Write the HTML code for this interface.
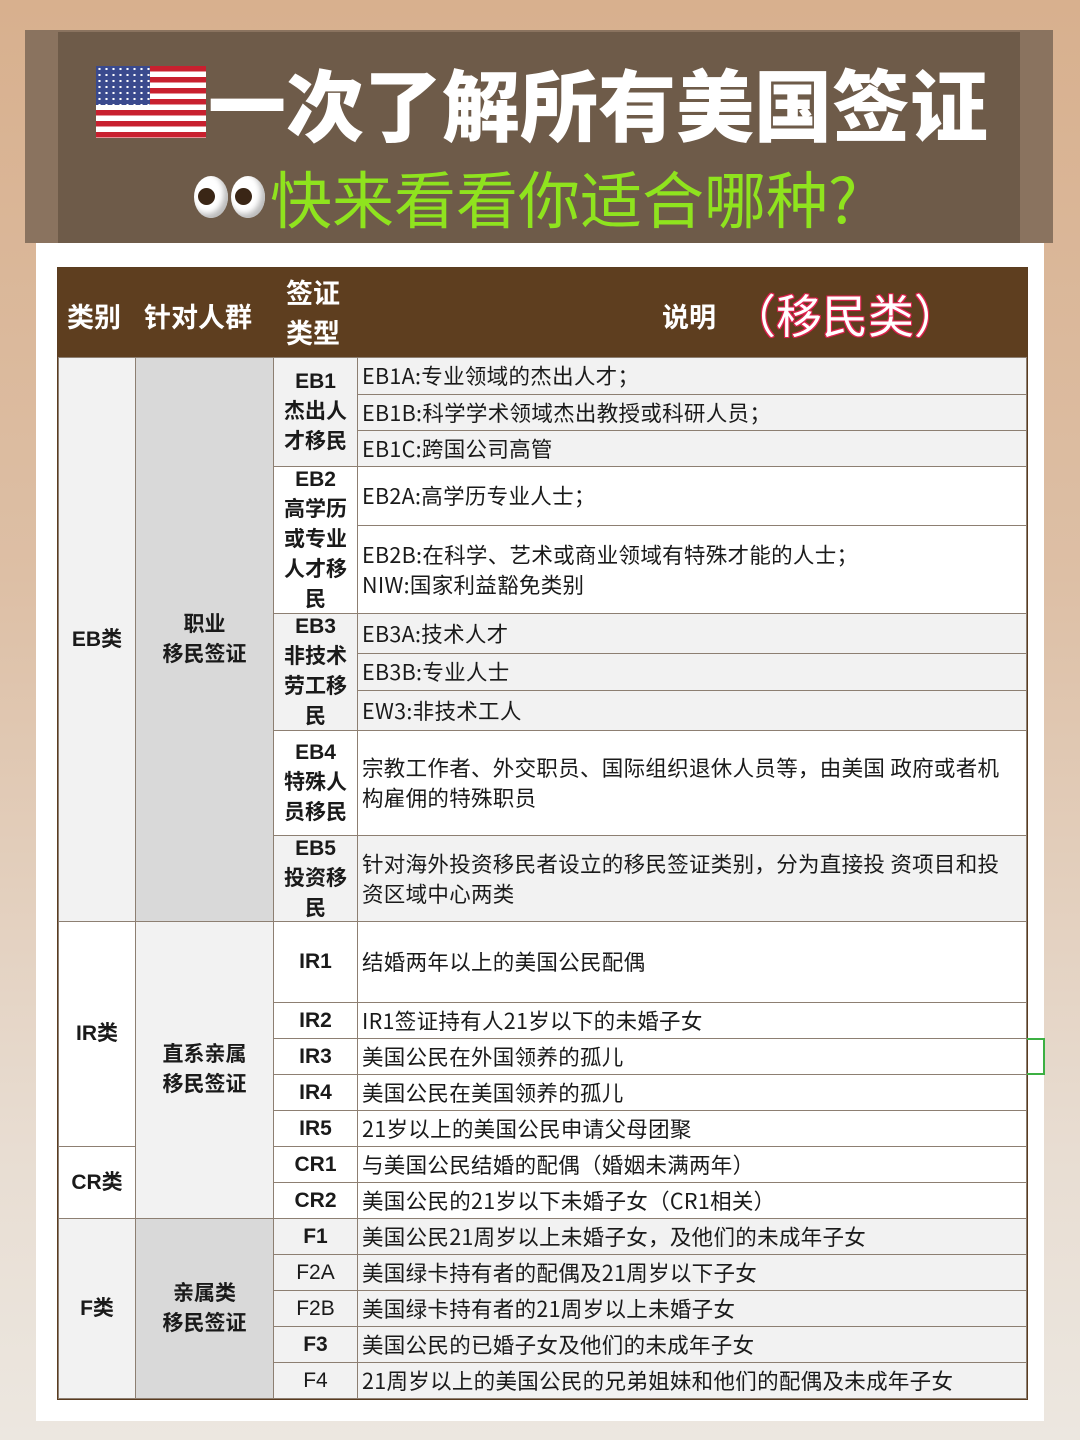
<!DOCTYPE html>
<html><head><meta charset="utf-8"><style>
*{margin:0;padding:0;box-sizing:border-box}
body{width:1080px;height:1440px;position:relative;overflow:hidden;font-family:"Liberation Sans","Noto Sans CJK SC",sans-serif;background:linear-gradient(180deg,#d8b08e 0%,#ddbfa5 40%,#e8ddd2 80%,#ece7e0 100%)}
.c{position:absolute;border:1px solid #8d7f72;display:flex;align-items:center;color:#1a1a1a}
.d{padding-left:4px;font-size:21.5px;line-height:30px;background:#fff;font-family:"Noto Sans CJK SC",sans-serif;letter-spacing:0.3px}
.g{background:#f2f2f2}
.k{justify-content:center;text-align:center;font-weight:bold;font-size:21px;line-height:30px}
.n{font-weight:normal}
.h{position:absolute;color:#fff;font-weight:bold;font-size:27px}
</style></head><body>
<div style="position:absolute;left:25px;top:30px;width:1028px;height:213px;background:#8a735f"></div>
<div style="position:absolute;left:58px;top:32px;width:962px;height:211px;background:#6e5b49"></div>
<div style="position:absolute;left:36px;top:243px;width:1008px;height:1178px;background:#fff"></div>
<!-- flag -->
<div style="position:absolute;left:96px;top:66px;width:110px;height:72px;background:repeating-linear-gradient(180deg,#c8202f 0 5.5px,#fff 5.5px 11px)"></div>
<div style="position:absolute;left:96px;top:66px;width:54px;height:39px;background:#3a4a8e;background-image:radial-gradient(#fff 1px,transparent 1.5px);background-size:7px 6px"></div>
<div style="position:absolute;left:208px;top:52px;font-size:78px;font-weight:900;color:#fff;font-family:'Noto Sans CJK SC',sans-serif;line-height:100px;white-space:nowrap">一次了解所有美国签证</div>
<div style="position:absolute;left:194px;top:176px;width:34px;height:42px;border-radius:50%;background:#fff;box-shadow:inset -4px -4px 6px #bbb"><div style="position:absolute;left:4px;top:12px;width:17px;height:17px;border-radius:50%;background:#3a2616"></div></div>
<div style="position:absolute;left:231px;top:176px;width:34px;height:42px;border-radius:50%;background:#fff;box-shadow:inset -4px -4px 6px #bbb"><div style="position:absolute;left:4px;top:12px;width:17px;height:17px;border-radius:50%;background:#3a2616"></div></div>
<div style="position:absolute;left:270px;top:158px;font-size:62px;color:#8fe31e;font-family:'Noto Sans CJK SC',sans-serif;line-height:76px;white-space:nowrap">快来看看你适合哪种?</div>

<div style="position:absolute;left:57px;top:267px;width:971px;height:1133px;border:2px solid #5a3c20"></div>
<div style="position:absolute;left:58px;top:268px;width:969px;height:89px;background:#5e3e1f"></div>
<div class="h" style="left:67px;top:296px">类别</div>
<div class="h" style="left:144px;top:296px">针对人群</div>
<div class="h" style="left:286px;top:274px;line-height:40px">签证<br>类型</div>
<div class="h" style="left:662px;top:296px">说明</div>
<div style="position:absolute;left:730px;top:284px;font-size:46px;color:#fff;text-shadow:0 0 2px #e0224f,1px 1px 0 #e0224f,-1px -1px 0 #e0224f,1px -1px 0 #e0224f,-1px 1px 0 #e0224f;line-height:60px;font-family:'Noto Sans CJK SC',sans-serif;white-space:nowrap">（移民类）</div>

<div class="c g k" style="left:58px;top:357px;width:78px;height:565px">EB类</div>
<div class="c g k" style="left:58px;top:921px;width:78px;height:226px;background:#fff">IR类</div>
<div class="c k" style="left:58px;top:1146px;width:78px;height:73px;background:#fff">CR类</div>
<div class="c g k" style="left:58px;top:1218px;width:78px;height:181px">F类</div>
<div class="c k" style="left:135px;top:357px;width:139px;height:565px;background:#d9d9d9">职业<br>移民签证</div>
<div class="c g k" style="left:135px;top:921px;width:139px;height:298px">直系亲属<br>移民签证</div>
<div class="c k" style="left:135px;top:1218px;width:139px;height:181px;background:#d9d9d9">亲属类<br>移民签证</div>

<div class="c g k" style="left:273px;top:357px;width:85px;height:110px">EB1<br>杰出人<br>才移民</div>
<div class="c k" style="left:273px;top:466px;width:85px;height:148px;background:#fff">EB2<br>高学历<br>或专业<br>人才移<br>民</div>
<div class="c g k" style="left:273px;top:613px;width:85px;height:118px">EB3<br>非技术<br>劳工移<br>民</div>
<div class="c k" style="left:273px;top:730px;width:85px;height:106px;background:#fff">EB4<br>特殊人<br>员移民</div>
<div class="c g k" style="left:273px;top:835px;width:85px;height:87px">EB5<br>投资移<br>民</div>
<div class="c k" style="left:273px;top:921px;width:85px;height:82px;background:#fff">IR1</div>
<div class="c k" style="left:273px;top:1002px;width:85px;height:37px;background:#fff">IR2</div>
<div class="c k" style="left:273px;top:1038px;width:85px;height:37px;background:#fff">IR3</div>
<div class="c k" style="left:273px;top:1074px;width:85px;height:37px;background:#fff">IR4</div>
<div class="c k" style="left:273px;top:1110px;width:85px;height:37px;background:#fff">IR5</div>
<div class="c k" style="left:273px;top:1146px;width:85px;height:37px;background:#fff">CR1</div>
<div class="c k" style="left:273px;top:1182px;width:85px;height:37px;background:#fff">CR2</div>
<div class="c g k" style="left:273px;top:1218px;width:85px;height:37px">F1</div>
<div class="c g k n" style="left:273px;top:1254px;width:85px;height:37px">F2A</div>
<div class="c g k n" style="left:273px;top:1290px;width:85px;height:37px">F2B</div>
<div class="c g k" style="left:273px;top:1326px;width:85px;height:37px">F3</div>
<div class="c g k n" style="left:273px;top:1362px;width:85px;height:37px">F4</div>

<div class="c d g" style="left:357px;top:357px;width:670px;height:38px">EB1A:专业领域的杰出人才；</div>
<div class="c d g" style="left:357px;top:394px;width:670px;height:37px">EB1B:科学学术领域杰出教授或科研人员；</div>
<div class="c d g" style="left:357px;top:430px;width:670px;height:37px">EB1C:跨国公司高管</div>
<div class="c d" style="left:357px;top:466px;width:670px;height:60px">EB2A:高学历专业人士；</div>
<div class="c d" style="left:357px;top:525px;width:670px;height:89px">EB2B:在科学、艺术或商业领域有特殊才能的人士；<br>NIW:国家利益豁免类别</div>
<div class="c d g" style="left:357px;top:613px;width:670px;height:41px">EB3A:技术人才</div>
<div class="c d g" style="left:357px;top:653px;width:670px;height:38px">EB3B:专业人士</div>
<div class="c d g" style="left:357px;top:690px;width:670px;height:41px">EW3:非技术工人</div>
<div class="c d" style="left:357px;top:730px;width:670px;height:106px">宗教工作者、外交职员、国际组织退休人员等，由美国 政府或者机<br>构雇佣的特殊职员</div>
<div class="c d g" style="left:357px;top:835px;width:670px;height:87px">针对海外投资移民者设立的移民签证类别，分为直接投 资项目和投<br>资区域中心两类</div>
<div class="c d" style="left:357px;top:921px;width:670px;height:82px">结婚两年以上的美国公民配偶</div>
<div class="c d" style="left:357px;top:1002px;width:670px;height:37px">IR1签证持有人21岁以下的未婚子女</div>
<div class="c d" style="left:357px;top:1038px;width:670px;height:37px">美国公民在外国领养的孤儿</div>
<div class="c d" style="left:357px;top:1074px;width:670px;height:37px">美国公民在美国领养的孤儿</div>
<div class="c d" style="left:357px;top:1110px;width:670px;height:37px">21岁以上的美国公民申请父母团聚</div>
<div class="c d" style="left:357px;top:1146px;width:670px;height:37px">与美国公民结婚的配偶（婚姻未满两年）</div>
<div class="c d" style="left:357px;top:1182px;width:670px;height:37px">美国公民的21岁以下未婚子女（CR1相关）</div>
<div class="c d g" style="left:357px;top:1218px;width:670px;height:37px">美国公民21周岁以上未婚子女，及他们的未成年子女</div>
<div class="c d g" style="left:357px;top:1254px;width:670px;height:37px">美国绿卡持有者的配偶及21周岁以下子女</div>
<div class="c d g" style="left:357px;top:1290px;width:670px;height:37px">美国绿卡持有者的21周岁以上未婚子女</div>
<div class="c d g" style="left:357px;top:1326px;width:670px;height:37px">美国公民的已婚子女及他们的未成年子女</div>
<div class="c d g" style="left:357px;top:1362px;width:670px;height:37px">21周岁以上的美国公民的兄弟姐妹和他们的配偶及未成年子女</div>
<div style="position:absolute;left:1027px;top:1038px;width:18px;height:37px;border:2px solid #3cb043;border-left:none"></div>
</body></html>
